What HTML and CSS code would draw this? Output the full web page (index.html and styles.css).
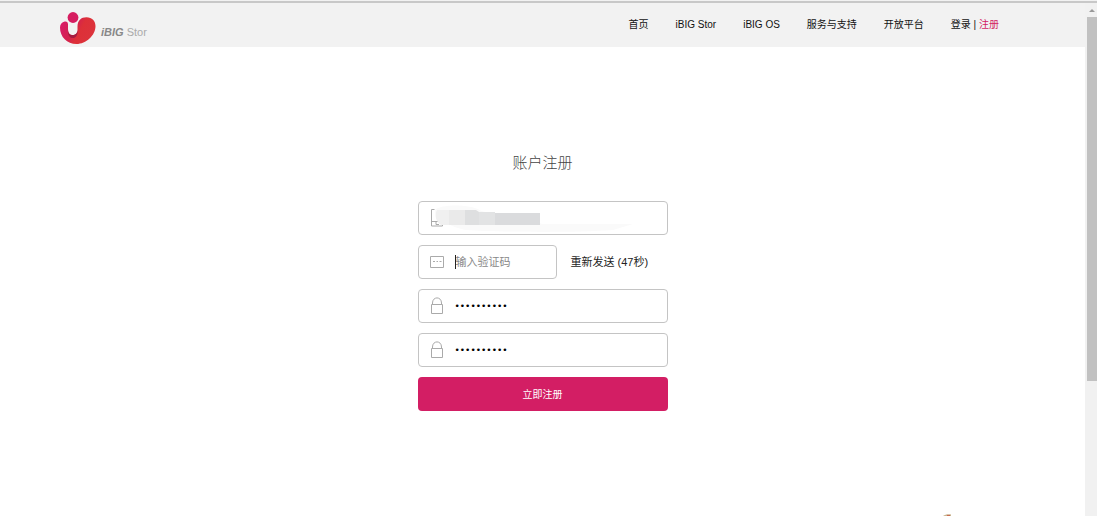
FILE: index.html
```html
<!DOCTYPE html>
<html lang="zh-CN">
<head>
<meta charset="utf-8">
<title>账户注册 - iBIG Stor</title>
<link rel="stylesheet" href="styles.css">
</head>
<body>
<div class="viewport">
  <div class="page">
    <header class="header">
      <a class="logo" href="#" aria-label="iBIG Stor">
        <svg class="logo-mark" viewBox="0 0 36 33" aria-hidden="true">
          <defs>
            <linearGradient id="petal" x1="0" y1="0.2" x2="1" y2="0.6">
              <stop offset="0" stop-color="#d91c6b"/>
              <stop offset="0.4" stop-color="#d4214f"/>
              <stop offset="0.6" stop-color="#dd3038"/>
              <stop offset="1" stop-color="#dc333c"/>
            </linearGradient>
          </defs>
          <path fill="url(#petal)" d="M0 15.500C0 12 2 10 4.700 9.500C7 9.100 8 10.500 8 12.500V18C8 21 9.800 23 12.500 23C15.500 23 17.500 21 17.500 18V14.500C17.500 8.500 21 5.200 26.500 5.200C32 5.200 35.500 9 35.500 14C35.500 23.500 26 32 16.500 32C7 32 0 25 0 15.500Z"/>
          <path fill="#a51c40" d="M8 17C8 21 9.800 23 12.500 23C15.500 23 17.500 21 17.500 18C18.500 23 15.500 26.500 12 26C9 25.500 7.500 22 8 17Z"/>
          <circle cx="13" cy="5.500" r="5.400" fill="#d61d60"/>
        </svg>
        <span class="logo-text"><b>iBIG</b> Stor</span>
      </a>
      <nav class="nav">
        <a href="#">首页</a>
        <a href="#">iBIG Stor</a>
        <a href="#">iBIG OS</a>
        <a href="#">服务与支持</a>
        <a href="#">开放平台</a>
        <span class="account"><a href="#">登录</a> | <a class="current" href="#">注册</a></span>
      </nav>
    </header>
    <main class="main">
      <h1 class="title">账户注册</h1>
      <form class="form">
        <div class="field">
          <svg class="icon" viewBox="0 0 14 18" aria-hidden="true"><path d="M4.500 .5H1.500V17H12.500V10M1.500 12.500H8M6 12.500V15.500H9" fill="none" stroke="#aaa"/></svg>
          <input class="input" type="tel" aria-label="手机号">
          <svg class="mask" viewBox="0 0 216 32" aria-hidden="true">
            <path fill="#fafafa" d="M2 8C8 2 38 2 48 9L110 22H200L180 28C140 31 60 30 34 28C20 26 0 16 2 8Z"/>
            <path fill="#f0f0f0" d="M4 8H20V23H8C3 20 1 13 4 8Z"/>
            <path fill="#eaeaea" d="M16 8H32V23H16Z"/>
            <path fill="#dedfe0" d="M32 8H43L46 10V23H32Z"/>
            <path fill="#e2e3e4" d="M46 10H62V23H46Z"/>
            <path fill="#dadbdd" d="M62 11H107V23H62Z"/>
          </svg>
        </div>
        <div class="row">
          <div class="field field-code">
            <svg class="icon" viewBox="0 0 14 18" aria-hidden="true"><path d="M.5 3.500H13.500V14.500H.5Z" fill="none" stroke="#aaa"/><path d="M3 8.500H5M6.500 8.500H8M9.500 8.500H11.500" stroke="#aaa"/></svg>
            <input class="input input-code" type="text" placeholder="输入验证码" aria-label="验证码">
          </div>
          <button class="resend" type="button">重新发送 (47秒)</button>
        </div>
        <div class="field">
          <svg class="icon" viewBox="0 0 14 18" aria-hidden="true"><path d="M1.500 7.500H12.500V16.500H1.500ZM2.500 7.500V6C2.500 -.8 11.500 -.8 11.500 6V7.500" fill="none" stroke="#aaa"/></svg>
          <input class="input input-password" type="password" value="0000000000" aria-label="密码">
        </div>
        <div class="field">
          <svg class="icon" viewBox="0 0 14 18" aria-hidden="true"><path d="M1.500 7.500H12.500V16.500H1.500ZM2.500 7.500V6C2.500 -.8 11.500 -.8 11.500 6V7.500" fill="none" stroke="#aaa"/></svg>
          <input class="input input-password" type="password" value="0000000000" aria-label="确认密码">
        </div>
        <button class="submit" type="button">立即注册</button>
      </form>
    </main>
    <svg class="hint" viewBox="0 0 8 2" aria-hidden="true"><path d="M0 2C2 .5 5 0 8 .5V2Z" fill="#c9b38e"/><path d="M4 1H7V2H4Z" fill="#c96a50"/></svg>
  </div>
  <div class="scrollbar" aria-hidden="true">
    <svg class="arrow" viewBox="0 0 10 14"><path d="M2 9L5 6L8 9Z" fill="#999"/></svg>
    <div class="thumb"></div>
  </div>
</div>
</body>
</html>
```
FILE: styles.css
```css
* {
  box-sizing: border-box;
}

body {
  margin: 0;
  background: #fff;
  color: #111;
  font: 10px/16px "Liberation Sans", "Noto Sans CJK SC", sans-serif;
}

a {
  color: inherit;
  text-decoration: none;
}

.viewport {
  display: flex;
  height: 100vh;
  border-top: 1px solid #f2f2f2;
  overflow: hidden;
}

.page {
  position: relative;
  flex: 1;
  border-top: 2px solid #c8c8c8;
}

.header {
  display: flex;
  justify-content: space-between;
  height: 44px;
  padding: 0 86px 0 60px;
  background: #f2f2f2;
}

.logo {
  display: flex;
  align-items: flex-start;
  gap: 5px;
  padding-top: 9px;
}

.logo-mark {
  width: 36px;
  height: 33px;
}

.logo-text {
  padding-top: 12px;
  color: #aaa;
  font-size: 11px;
  line-height: 16px;
}

.logo-text b {
  color: #888;
  font-style: italic;
}

.nav {
  display: flex;
  gap: 27px;
  padding-top: 14px;
}

.current {
  color: #d31e64;
}

.main {
  display: flex;
  flex-direction: column;
  align-items: center;
  padding-top: 104px;
}

.title {
  margin: 0 0 26px;
  color: #444;
  font-size: 15px;
  font-weight: 300;
  line-height: 24px;
}

.form {
  display: flex;
  flex-direction: column;
  gap: 10px;
  width: 250px;
}

.field {
  position: relative;
  display: flex;
  align-items: center;
  gap: 11px;
  height: 34px;
  padding: 0 11px;
  border: 1px solid #c4c4c4;
  border-radius: 4px;
}

.row {
  display: flex;
  gap: 14px;
}

.field-code {
  width: 139px;
}

.icon {
  flex: none;
  width: 14px;
  height: 18px;
}

.input {
  flex: 1;
  min-width: 0;
  height: 24px;
  padding: 0;
  border: 0;
  outline: 0;
  background: none;
  color: #000;
  font: 11px "Liberation Sans", "Noto Sans CJK SC", sans-serif;
}

.input-code {
  height: 14px;
  border-left: 1px solid #222;
}

.input-password {
  font: 9px "DejaVu Sans", sans-serif;
}

.input::placeholder {
  color: #888;
}

.mask {
  position: absolute;
  top: 0;
  left: 14px;
  width: 216px;
  height: 32px;
}

.resend {
  padding: 0 0 2px;
  border: 0;
  background: none;
  color: #222;
  font: 11px "Liberation Sans", "Noto Sans CJK SC", sans-serif;
}

.submit {
  height: 34px;
  padding: 0 0 2px;
  border: 0;
  border-radius: 4px;
  background: #d31e64;
  color: #fff;
  font: 10px "Liberation Sans", "Noto Sans CJK SC", sans-serif;
}

.hint {
  position: absolute;
  right: 134px;
  bottom: 0;
  width: 8px;
  height: 2px;
}

.scrollbar {
  display: flex;
  flex-direction: column;
  width: 12px;
  padding-left: 2px;
  border-top: 2px solid #c8c8c8;
  background: #f1f1f1;
}

.arrow {
  width: 10px;
  height: 14px;
}

.thumb {
  height: 71%;
  background: #c1c1c1;
}
```
